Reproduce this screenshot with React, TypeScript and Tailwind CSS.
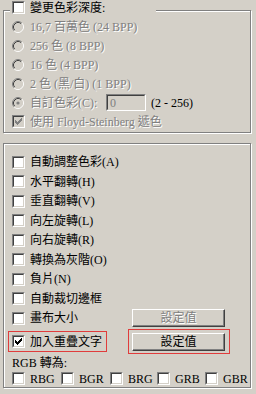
import type { ReactNode } from 'react';

const colorRows = [
  '16,7 百萬色 (24 BPP)',
  '256 色 (8 BPP)',
  '16 色 (4 BPP)',
  '2 色 (黑/白) (1 BPP)',
];

const options = [
  '自動調整色彩(A)',
  '水平翻轉(H)',
  '垂直翻轉(V)',
  '向左旋轉(L)',
  '向右旋轉(R)',
  '轉換為灰階(O)',
  '負片(N)',
  '自動裁切邊框',
];

const rgbItems = [
  { label: 'RBG', width: 'w-[49px]' },
  { label: 'BGR', width: 'w-[49px]' },
  { label: 'BRG', width: 'w-[47px]' },
  { label: 'GRB', width: 'w-[48px]' },
  { label: 'GBR', width: '' },
];

function Label({ children, disabled }: { children: ReactNode; disabled?: boolean }) {
  return (
    <span className={`whitespace-nowrap ${disabled ? 'text-[#808080] [text-shadow:1px_1px_0_#fff]' : 'text-black'}`}>
      {children}
    </span>
  );
}

function Check({ checked, disabled }: { checked?: boolean; disabled?: boolean }) {
  return (
    <div className="w-[13px] h-[13px] shrink-0 border border-t-[#808080] border-l-[#808080] border-r-white border-b-white">
      <div
        className={`w-full h-full border border-t-[#404040] border-l-[#404040] border-r-[#d4d0c8] border-b-[#d4d0c8] ${
          disabled ? 'bg-[#d4d0c8]' : 'bg-white'
        }`}
      >
        {checked && (
          <svg width="9" height="9" viewBox="0 0 9 9" className="block">
            <path
              d="M1 3h1v3H1zM2 4h1v3H2zM3 5h1v3H3zM4 4h1v3H4zM5 3h1v3H5zM6 2h1v3H6zM7 1h1v3H7z"
              fill={disabled ? '#808080' : '#000'}
            />
          </svg>
        )}
      </div>
    </div>
  );
}

function Radio({ checked }: { checked?: boolean }) {
  return (
    <svg width="12" height="12" viewBox="0 0 12 12" className="block shrink-0">
      <circle cx="6" cy="6" r="5" fill="#d4d0c8" />
      <path d="M2.11 9.89A5.5 5.5 0 0 1 9.89 2.11" fill="none" stroke="#808080" />
      <path d="M9.89 2.11A5.5 5.5 0 0 1 2.11 9.89" fill="none" stroke="#fff" />
      <path d="M2.82 9.18A4.5 4.5 0 0 1 9.18 2.82" fill="none" stroke="#404040" />
      <path d="M9.18 2.82A4.5 4.5 0 0 1 2.82 9.18" fill="none" stroke="#d4d0c8" />
      {checked && <circle cx="6" cy="6" r="1.6" fill="#808080" />}
    </svg>
  );
}

function Button({ disabled }: { disabled?: boolean }) {
  return (
    <div className="w-[93px] h-[18px] flex items-center justify-center border border-t-white border-l-white border-r-[#404040] border-b-[#404040] shadow-[inset_-1px_-1px_0_#808080]">
      <Label disabled={disabled}>設定值</Label>
    </div>
  );
}

export default function App() {
  return (
    <div className="w-[256px] h-[394px] overflow-hidden bg-[#d4d0c8] pt-[10px] text-[12px] leading-[14px] font-['Liberation_Serif','Noto_Sans_CJK_TC',serif]">
      {/* color depth group */}
      <div className="relative ml-[3px] w-[248px] h-[123px] pt-[6px] pl-[8px] border border-[#808080] shadow-[inset_1px_1px_0_#fff,1px_1px_0_#fff]">
        <div className="absolute left-[6px] top-[-11px] w-[146px] h-[15px] bg-[#d4d0c8] pl-[2px] pt-[1px] flex items-start gap-[5px]">
          <Check />
          <Label>變更色彩深度:</Label>
        </div>

        {colorRows.map(row => (
          <div key={row} className="flex items-center h-[19px] gap-[6px]">
            <Radio />
            <Label disabled>{row}</Label>
          </div>
        ))}

        <div className="flex items-center h-[19px]">
          <Radio checked />
          <div className="ml-[6px] w-[76px]">
            <Label disabled>自訂色彩(C):</Label>
          </div>
          <div className="w-[40px] h-[17px] border border-t-[#808080] border-l-[#808080] border-r-white border-b-white">
            <div className="w-full h-full border border-t-[#404040] border-l-[#404040] border-r-[#d4d0c8] border-b-[#d4d0c8] pl-[2px] flex items-center text-[#808080]">
              0
            </div>
          </div>
          <span className="ml-[5px]">(2 - 256)</span>
        </div>

        <div className="flex items-center h-[19px] gap-[5px]">
          <Check checked disabled />
          <Label disabled>使用 Floyd-Steinberg 遞色</Label>
        </div>
      </div>

      {/* options group */}
      <div className="ml-[3px] mt-[10px] w-[248px] h-[245px] pt-[8px] pl-[4px] border border-[#808080] shadow-[inset_1px_1px_0_#fff,1px_1px_0_#fff]">
        {options.map((opt, i) => (
          <div key={opt} className={`flex items-center gap-[5px] pl-[4px] ${i % 2 === 0 ? 'h-[20px]' : 'h-[19px]'}`}>
            <Check />
            <Label>{opt}</Label>
          </div>
        ))}

        <div className="flex items-center h-[20px] pl-[4px]">
          <div className="w-[120px] flex items-center gap-[5px]">
            <Check />
            <Label>畫布大小</Label>
          </div>
          <Button disabled />
        </div>

        <div className="flex items-center h-[25px] mt-[1px]">
          <div className="w-[99px] h-[21px] border border-[#e03c3c] pl-[3px] flex items-center gap-[5px]">
            <Check checked />
            <Label>加入重疊文字</Label>
          </div>
          <div className="ml-[21px] w-[102px] h-[25px] border border-[#e03c3c] pl-[3px] pt-[3px]">
            <Button />
          </div>
        </div>

        <div className="flex items-center h-[17px] pl-[4px]">
          <Label>RGB 轉為:</Label>
        </div>

        <div className="flex items-center h-[15px] pl-[4px]">
          {rgbItems.map(item => (
            <div key={item.label} className={`flex items-center gap-[5px] ${item.width}`}>
              <Check />
              <Label>{item.label}</Label>
            </div>
          ))}
        </div>
      </div>
    </div>
  );
}
